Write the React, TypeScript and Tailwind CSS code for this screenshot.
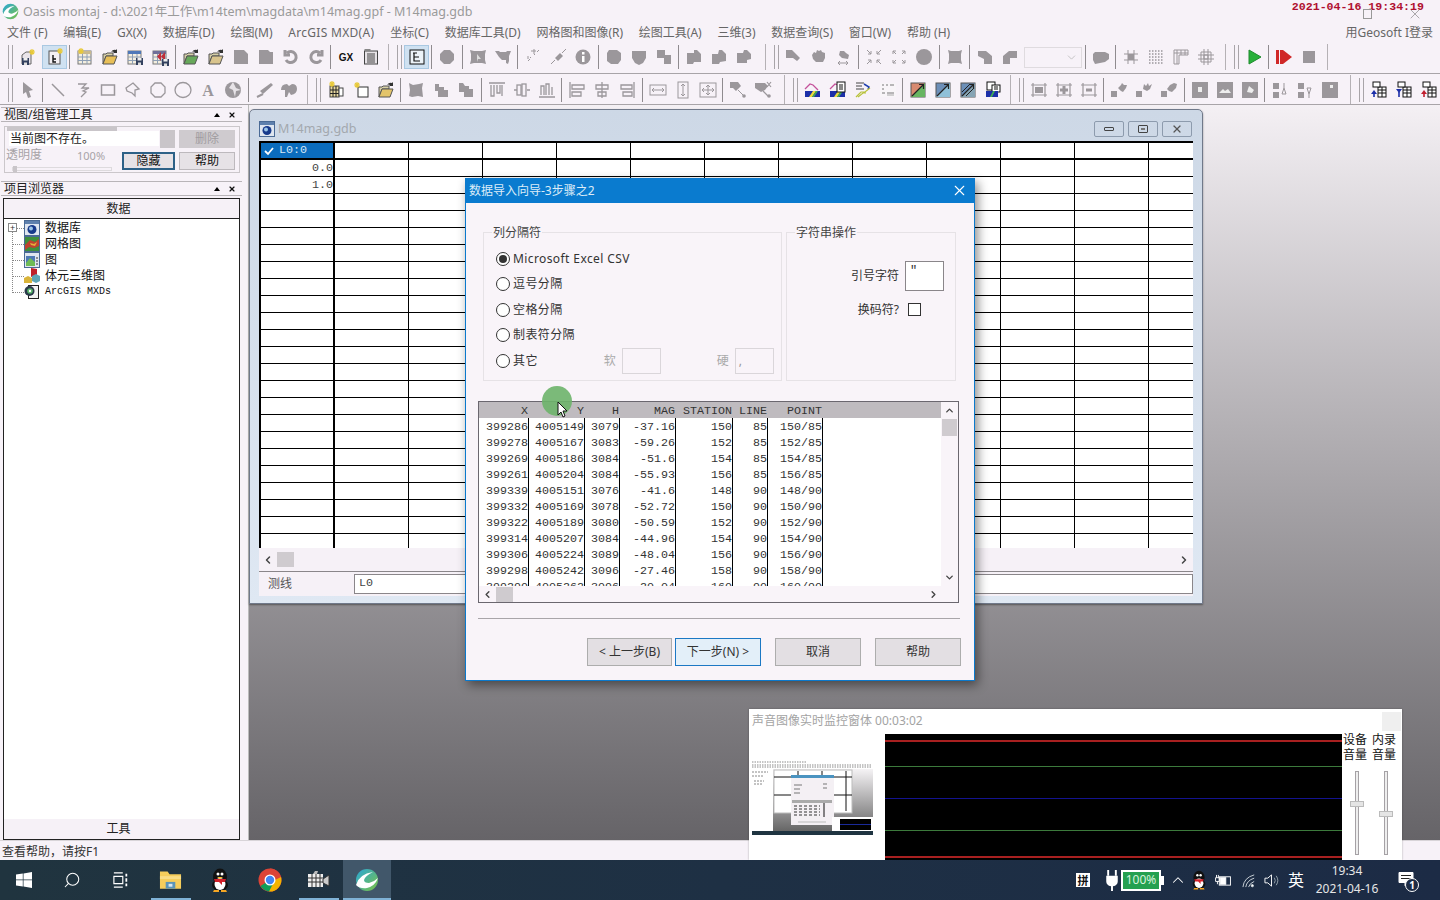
import type { ReactNode } from "react";
import { ChevronDown, ChevronLeft, ChevronRight, ChevronUp, Search, X } from "lucide-react";

const SANS = "font-['Noto_Sans','Noto_Sans_CJK_SC',sans-serif]";
const MONO = "font-['Liberation_Mono','Noto_Sans_CJK_SC',monospace]";
const G = "#9b979b";

// 菜单
const menus = ["文件 (F)", "编辑(E)", "GX(X)", "数据库(D)", "绘图(M)", "ArcGIS MXD(A)", "坐标(C)", "数据库工具(D)", "网格图和图像(R)", "绘图工具(A)", "三维(3)", "数据查询(S)", "窗口(W)", "帮助 (H)"];

const Star = ({ x = 13, y = 3 }: { x?: number; y?: number }) => (
  <path d={`M${x} ${y - 3}v6M${x - 3} ${y}h6M${x - 2} ${y - 2}l4 4M${x + 2} ${y - 2}l-4 4`} stroke="#e8c93a" strokeWidth="1.200" />
);
const Disk = ({ x = 9, y = 10 }: { x?: number; y?: number }) => (
  <g>
    <rect x={x} y={y} width="7" height="7" fill="#33405e" />
    <rect x={x + 1.5} y={y} width="4" height="2.5" fill="#eee" />
    <rect x={x + 2} y={y + 4.5} width="3" height="2.5" fill="#ddd" />
  </g>
);
const Folder = ({ fill = "#e8bf58" }: { fill?: string }) => (
  <g>
    <path d="M2 6h3l1-1h6v3H5L2 16z" fill="#d6cfa8" stroke="#555" />
    <path d="M2 16l3-8h11l-3 8z" fill={fill} stroke="#555" />
    <path d="M10 4q2-3 5-2l1-1v4h-4l1-1q-2-1-3 0z" fill="#333" />
  </g>
);
const Table = ({ head = "#c9b98e" }: { head?: string }) => (
  <g>
    <rect x="2" y="3" width="13" height="13" fill="#f3eee0" stroke="#777" />
    <rect x="2" y="3" width="13" height="3" fill={head} />
    <path d="M2 9h13M2 12.500h13M6.500 6v10M11 6v10" stroke="#8e9fb5" />
  </g>
);
const blob = (d: string) => <path d={d} fill={G} />;
const line = (d: string, w = 1) => <path d={d} fill="none" stroke={G} strokeWidth={w} />;
const Curve = ({ children }: { children?: ReactNode }) => (
  <g>
    <path d="M1 8l5-5 3 1 5 5" fill="none" stroke="#c4509a" strokeWidth="1.300" />
    <rect x="1" y="10" width="15" height="6" fill="#1c2fa8" />
    <path d="M5 16l4-6h3l-4 6z" fill="#ecdc3a" />
    <path d="M8 16l4-6h2l-4 6z" fill="#3faa55" />
    {children}
  </g>
);
const Arrowed = ({ a, b }: { a: string; b: string }) => (
  <g>
    <rect x="2" y="2" width="14" height="14" fill={a} stroke="#555" />
    <path d="M2 16L16 2v14z" fill={b} />
    <path d="M3 15L14 4M10 3.500h4.500V8" fill="none" stroke="#222" strokeWidth="1.200" />
  </g>
);
const PairTable = ({ arrow, dir }: { arrow: string; dir: "down" | "up" }) => (
  <g>
    <rect x="8" y="6" width="8" height="10" fill="#fff" stroke="#111" />
    <path d="M8 9h8M8 12h8M12 6v10" stroke="#111" />
    <rect x="3" y="1" width="7" height="5" fill="#fff" stroke="#111" />
    <path d={dir === "up" ? "M4 13l-3 0 3-4 3 4z" : "M4 12l3-4H1z"} fill={arrow} />
    <rect x="3.200" y="11" width="1.600" height="5" fill={arrow} />
  </g>
);

const icons: Record<string, ReactNode> = {
  newProj: (<><path d="M3 7l4-3h5v12H3z" fill="#e9e4e9" stroke="#666" /><Disk x={3} y={10} /><Star x={13} y={4} /></>),
  newDb: (<><rect x="3" y="3" width="11" height="13" fill="#f4f0f4" stroke="#555" /><path d="M7 7v7h3M7 11h3" stroke="#111" strokeWidth="1.400" fill="none" /><Star x={14} y={3} /></>),
  newTable: (<><Table /><Star x={5} y={3} /></>),
  open: <Folder />,
  tableSave: (<><Table head="#4f78b8" /><Disk x={10} y={10} /></>),
  rewind: (<><Table head="#6f6f98" /><path d="M10 4v9l-4-4.500zM14 4v9l-4-4.500z" fill="#c0303a" /><Disk x={11} y={11} /></>),
  openMap: (<><Folder fill="#67a85a" /></>),
  openDoc: <Folder fill="#d9c48d" />,
  docA: blob("M2 2h10l4 4v10H2z"),
  docB: blob("M2 2h9l2 2h3v12H2z"),
  undo: line("M5 5a5.500 5.500 0 1 1-1 7M3 2v5h5", 3),
  redo: line("M13 5a5.500 5.500 0 1 0 1 7M15 2v5h-5", 3),
  gx: <text x="9" y="13" textAnchor="middle" fontSize="10" fontWeight="700" fontFamily="Liberation Sans" fill="#111">GX</text>,
  notes: (<><rect x="2.500" y="3" width="13" height="13" fill="#e6e2e6" stroke="#444" /><rect x="2.500" y="1" width="6" height="2" fill="#888" /><path d="M5 6h8M5 8h8M5 10h8M5 12h8M5 14h8" stroke="#444" /></>),
  tree: (<><rect x="2" y="2" width="14" height="14" fill="#edf3f8" stroke="#111" /><path d="M5 5h4M6 5v8h6M6 9h5" stroke="#111" fill="none" strokeWidth="1.200" /></>),
  hexBlob: blob("M6 2h6l4 4v6l-4 4H6l-4-4V6z"),
  roughArrow: (<>{blob("M1 2l4 1h8l4-1-1 4v6l1 4-4-1H5l-4 1 1-4V6z")}<path d="M8 6l4 5H9l-1 3z" fill="#ddd" /></>),
  bat: blob("M1 3h4l1 1h6l1-1h4l-2 5v5l-1 3-2-1v-3H8L5 9 3 6z"),
  spark: line("M4 13l2-2M7 9l-1 1M10 7l1-1M13 4l2-2M4 8v3M10 1v5M7 3h5", 1),
  diag: (<>{blob("M6 10l5-5 3 3-5 5z")}{line("M2 16l4-4M13 5l4-4", 1)}</>),
  info: (<><circle cx="9" cy="9" r="7.500" fill={G} /><rect x="8" y="8" width="2.500" height="6" fill="#fff" /><rect x="8" y="4" width="2.500" height="2.500" fill="#fff" /></>),
  lump: blob("M4 2h8l4 3v7l-3 4H6l-4-3V5z"),
  shield: blob("M2 3h14v7l-3 5-4 2-4-2-3-5z"),
  stair: blob("M2 2h8v5h6v9H9v-6H2z"),
  pent: blob("M2 5h7V2h3l4 4v8h-7l-1 2H2z"),
  pentB: blob("M2 6h6l1-4h3l4 4v7l-6 1-1 2H2z"),
  pentC: blob("M2 5h6l1-3h3l4 4v5l-4 1v3H2z"),
  corner: blob("M1 2h6l8 8-3 3-4-3H1z"),
  hand: blob("M2 7l2-3 2 1 1-3 2 1 2-1 1 2 3 1v5l-2 4H6L3 11z"),
  handArrow: (<>{blob("M5 3h4l2 2 3 2-1 4-6-1-3-3z")}{line("M3 15h10M3 15l2-2M3 15l2 2M13 15l-2-2M13 15l-2 2")}</>),
  inward: line("M2 2l4 4M6 3v3H3M16 2l-4 4M12 3v3h3M2 16l4-4M6 15v-3H3M16 16l-4-4M12 15v-3h3"),
  outward: line("M6 6L3 3M3 6V3h3M12 6l3-3M12 3h3v3M6 12l-3 3M3 12v3h3M12 12l3 3M12 15h3v-3"),
  dot: <circle cx="9" cy="9" r="8" fill={G} />,
  squareBlob: blob("M2 2l3 1h8l3-1-1 4v6l1 4-3-1H5l-3 1 1-4V6z"),
  stepA: blob("M2 3h8l6 5v8H8v-5L2 8z"),
  stepB: blob("M2 16V8l6-5h8v7H9v6z"),
  cloud: blob("M3 4h10l4 2v5l-4 3-10 2-2-4V6z"),
  gridA: (<>{line("M2 6h14M2 12h14M6 2v14M12 2v14")}<rect x="6" y="6" width="6" height="6" fill={G} /></>),
  gridDots: <path d="M2 3h14M2 6h14M2 9h14M2 12h14M2 15h14" fill="none" stroke={G} strokeWidth="1.500" strokeDasharray="1.500 1.500" />,
  gridL: line("M2 2h14v5H7v9H2zM2 5h14M5 2v14M9 2v5M13 2v5"),
  gridC: line("M4 4h10v10H4zM1 7h16M1 11h16M7 1v16M11 1v16M7 7h4v4H7z"),
  play: <path d="M4 2l12 7-12 7z" fill="#28b03a" stroke="#1f8c2e" />,
  redPlay: (<><rect x="1" y="2" width="3" height="14" fill="#d02828" /><rect x="5" y="2" width="3" height="14" fill="#d02828" /><path d="M8 2l9 7-9 7z" fill="#d02828" /></>),
  stop: <rect x="3" y="3" width="12" height="12" fill="#9b979b" />,
  pointer: blob("M4 1l10 8-4 1 2 6-3 1-2-6-3 2z"),
  lineT: line("M3 3l12 12", 1.500),
  poly: line("M4 3h8l-4 4h7l-6 3 3 1-5 5", 1.300),
  rect: <rect x="2.500" y="4" width="13" height="10" fill="none" stroke={G} strokeWidth="1.500" />,
  arrowPoly: line("M9 2l6 6-4 1v6l-3-3-5-2-1-3z", 1.300),
  octa: line("M6 2h6l4 4v6l-4 4H6l-4-4V6z", 1.300),
  ellipse: <ellipse cx="9" cy="9" rx="8" ry="7.500" fill="none" stroke={G} strokeWidth="1.300" />,
  letterA: <text x="9" y="15" textAnchor="middle" fontSize="16" fontWeight="700" fontFamily="Liberation Serif" fill={G}>A</text>,
  globe: (<><circle cx="9" cy="9" r="8" fill={G} /><path d="M9 1l3 6 5 2-5 1-1 6-2-7-4-2z" fill="#e7e3e7" /></>),
  brush: (<>{blob("M16 2l2 2-10 9-3-3z")}{line("M2 16l6-3", 2)}</>),
  leaf: blob("M1 9q0-6 6-6l2 2 3-2q5 0 5 5t-6 6l-2-3-2 5H5V9z"),
  newGrid: (<><rect x="3" y="5" width="9" height="11" fill="#e8d9a0" stroke="#444" /><path d="M6 5v11M9 5v11M3 9h9M3 12.500h9" stroke="#222" /><rect x="12" y="7" width="4" height="8" fill="#fff" stroke="#444" /><Star x={5} y={3} /></>),
  newFrame: (<><rect x="6" y="6" width="10" height="10" fill="#fff" stroke="#333" /><Star x={5} y={4} /></>),
  openB: <Folder fill="#e3c46a" />,
  roughB: blob("M2 2l4 2 6-1 4-1-1 5 1 9-5-1-6 1-3-1 1-6z"),
  stepC: blob("M3 3h4v3h5v3h4v7H6v-6H3z"),
  stepD: blob("M2 2h4l2 3h4v3h4v8H7v-5H2z"),
  alignTop: (<>{line("M1 2h16M3 4v11h3V4M9 4v8h3V4M14 4v11", 1.300)}</>),
  alignMid: (<>{line("M1 9h3M14 9h3", 1.300)}<rect x="4" y="4" width="4" height="10" fill="none" stroke={G} strokeWidth="1.300" /><rect x="9" y="3" width="4" height="12" fill="none" stroke={G} strokeWidth="1.300" /></>),
  alignBot: (<>{line("M1 16h16M3 14V5h3v9M8 14V3h3v11M14 14V6", 1.300)}</>),
  alignL: (<>{line("M2 1v16M4 4h12v4H4zM4 11h9v4H4z", 1.300)}</>),
  alignC: (<>{line("M9 1v16M3 4h12v4H3zM5 11h8v4H5z", 1.300)}</>),
  alignR: (<>{line("M16 1v16M3 4h11v4H3zM5 11h9v4H5z", 1.300)}</>),
  sizeH: (<><rect x="1" y="4" width="16" height="10" fill="none" stroke={G} /><path d="M3 9h12M3 9l2-2M3 9l2 2M15 9l-2-2M15 9l-2 2" stroke={G} fill="none" /></>),
  sizeV: (<><rect x="4" y="1" width="10" height="16" fill="none" stroke={G} /><path d="M9 3v12M9 3l-2 2M9 3l2 2M9 15l-2-2M9 15l2-2" stroke={G} fill="none" /></>),
  sizeB: (<><rect x="1" y="2" width="16" height="14" fill="none" stroke={G} /><path d="M3 9h12M9 4v10M3 9l2-2M3 9l2 2M15 9l-2-2M15 9l-2 2M9 4L7 6M9 4l2 2M9 14l-2-2M9 14l2-2" stroke={G} fill="none" /></>),
  node: (<>{blob("M1 1h8l3 4-3 3-2 2-3-3H1z")}{line("M9 9l5 5", 1)}<circle cx="15" cy="15" r="1.800" fill={G} /></>),
  nodeX: (<>{blob("M1 2h10l3 3-3 4-4 2-6-4z")}{line("M13 1l4 5M17 1l-4 5M9 10l5 5", 1.200)}<circle cx="15" cy="15" r="1.800" fill={G} /></>),
  curveA: <Curve />,
  curveB: (<Curve><rect x="8" y="1" width="8" height="10" fill="#fff" stroke="#111" /><path d="M10 4h4M10 6h4M10 8h4" stroke="#111" /></Curve>),
  transfer: (<><path d="M2 2h8M2 5h6M2 8h8" stroke="#444" /><path d="M10 3l5 3-1 2" fill="none" stroke="#1f3fb0" strokeWidth="1.500" /><path d="M2 16l5-5h4l5-4M4 16l5-4h3" fill="none" stroke="#b8c23a" strokeWidth="1.200" /></>),
  legend: (<><rect x="1" y="2" width="16" height="14" fill="#f8f5f8" /><path d="M3 4h2M7 4h2M11 4h4M3 8h2M3 12h3M8 12h7" stroke="#777" /><path d="M8 14h7" stroke="#aaa" /></>),
  arrowA: <Arrowed a="#d88a70" b="#67b561" />,
  arrowB: <Arrowed a="#6c8fb8" b="#8fc0d8" />,
  arrowC: (<><Arrowed a="#6c8fb8" b="#86a4b4" /><path d="M3 11l8-8M7 15l8-8" stroke="#222" /></>),
  docsPair: (<><rect x="3" y="1" width="8" height="8" fill="#fff" stroke="#111" /><rect x="8" y="4" width="8" height="7" fill="#fff" stroke="#111" /><path d="M10 6h4M10 8h4" stroke="#111" /><rect x="2" y="10" width="12" height="6" fill="#1c2fa8" /><path d="M6 16l3-6h2l-3 6z" fill="#3faa55" /></>),
  frameX: (<>{line("M3 2v14M15 2v14M1 4h16M1 14h16", 1.200)}<rect x="5" y="6" width="8" height="6" fill={G} /></>),
  framePlus: (<>{line("M3 2v14M15 2v14M1 4h16M1 14h16", 1.200)}{line("M9 5v8M5 9h8", 3)}</>),
  frameMinus: (<>{line("M3 2v14M15 2v14M1 4h16M1 14h16", 1.200)}{line("M6 9h6", 3)}</>),
  stackA: blob("M1 10h6v6H1zM8 7l3-3 1-2 2 2 3 0-1 3-3 4-2-1z"),
  stackB: blob("M1 10h6v6H1zM8 8l1-5 2 2 2-3 1 3 3-2-2 5-3 2-2-1z"),
  stackC: blob("M1 10h6v6H1zM7 8l3-4 4-2 3 1-1 4-4 4-3-1z"),
  boxNotch: (<>{blob("M1 1h16v16H1z")}<rect x="7" y="6" width="4" height="5" fill="#eee" /></>),
  boxWave: (<>{blob("M1 1h16v16H1z")}<path d="M3 12l4-4 2 2 3-2 3 4z" fill="#eee" /></>),
  boxBite: (<>{blob("M1 1h16v16H1z")}<path d="M8 5l5 4-2 3-5-1z" fill="#eee" /></>),
  upDown: (<>{blob("M2 2h6v6H2zM2 11h6v6H2z")}{line("M13 7l2 6h-4zM13 2v5", 1)}</>),
  downUp: (<>{blob("M2 2h6v6H2zM2 11h6v6H2z")}{line("M13 13l2-6h-4zM13 13v4", 1)}</>),
  boxSm: (<>{blob("M1 1h16v16H1z")}<rect x="9" y="4" width="3" height="3" fill="#eee" /></>),
  tA: <PairTable arrow="#1c2fa8" dir="up" />,
  tB: <PairTable arrow="#1c2fa8" dir="down" />,
  tC: <PairTable arrow="#c02030" dir="up" />,
};

function Cell({ name }: { name: string }) {
  const active = name === "newDb" || name === "tree";
  return (
    <div className={`flex h-[24px] w-[25px] shrink-0 items-center justify-center ${active ? "border border-[#a9c8e2] bg-[#cfe1f1]" : ""}`}>
      <svg viewBox="0 0 18 18" className="h-[18px] w-[18px]">
        {icons[name]}
      </svg>
    </div>
  );
}

function Grip() {
  return <div className="mr-[2px] h-[24px] w-[5px] shrink-0 border-x border-[#a8a4a8]" />;
}

// バンド: | = 区切り  . = 2px
function Band({ items, className }: { items: string[]; className: string }) {
  return (
    <div className={`flex shrink-0 items-center border-r border-[#b5b1b5] pl-[8px] ${className}`}>
      <Grip />
      {items.map((it, i) =>
        it === "|" ? (
          <div key={i} className="mx-[2.250px] h-[24px] w-px shrink-0 bg-[#8f8b8f]" />
        ) : it === "." ? (
          <div key={i} className="w-[2px] shrink-0" />
        ) : it === "combo" ? (
          <div key={i} className="mx-[1px] flex h-[21px] w-[58px] shrink-0 items-center justify-end border border-[#dfdbdf] pr-[3px]">
            <ChevronDown size={13} strokeWidth={1.2} color="#aaa" />
          </div>
        ) : (
          <Cell key={i} name={it} />
        ),
      )}
    </div>
  );
}

function ToolBars() {
  return (
    <div className="flex flex-col">
      <div className="flex h-[30px] border-b border-[#a8a4a8] pb-[3px]">
        <Band className="w-[389px]" items={["newProj", ".", "newDb", "|", "newTable", "open", "tableSave", "rewind", "|", "openMap", "openDoc", "docA", "docB", "undo", "redo", "|", "gx", "notes"]} />
        <Band className="w-[377px]" items={["tree", "|", "hexBlob", "|", "roughArrow", "bat", "|", "spark", "diag", "info", "|", "lump", "shield", "stair", "|", "pent", "pentB", "pentC"]} />
        <Band className="w-[460px]" items={["corner", "hand", "handArrow", "|", "inward", "outward", "dot", "|", "squareBlob", "|", "stepA", "stepB", "combo", "|", "cloud", "|", "gridA", "gridDots", "gridL", "gridC"]} />
        <Band className="w-[102px]" items={["play", "|", "redPlay", "stop"]} />
      </div>
      <div className="flex h-[31px] border-b border-[#a8a4a8] pt-[1px]">
        <Band className="w-[308px]" items={["pointer", "|", "lineT", "poly", "rect", "arrowPoly", "octa", "ellipse", "letterA", "globe", "|", "brush", "leaf"]} />
        <Band className="w-[477px]" items={["newGrid", "newFrame", "openB", "|", "roughB", "stepC", "stepD", "|", "alignTop", "alignMid", "alignBot", "|", "alignL", "alignC", "alignR", "|", "sizeH", "sizeV", "sizeB", "|", "node", "nodeX"]} />
        <Band className="w-[226px]" items={["curveA", "curveB", "transfer", "legend", "|", "arrowA", "arrowB", "arrowC", "docsPair"]} />
        <Band className="w-[340px]" items={["frameX", "framePlus", "frameMinus", "|", "stackA", "stackB", "stackC", "|", "boxNotch", "boxWave", "boxBite", "|", "upDown", "downUp", "boxSm"]} />
        <div className="flex items-center pl-[8px]">
          <Grip />
          <Cell name="tA" />
          <Cell name="tB" />
          <Cell name="tC" />
        </div>
      </div>
    </div>
  );
}

function PanelHead({ title }: { title: string }) {
  return (
    <div className="flex h-[15px] items-center justify-between border-y border-[#b8b4b8] px-[3px] pr-[6px] text-[12px] leading-none text-[#222]">
      <span>{title}</span>
      <span className="flex items-center gap-[8px]">
        <span className="h-0 w-0 border-x-[3px] border-b-[4px] border-x-transparent border-b-black" />
        <X size={8} strokeWidth={3.5} color="#111" />
      </span>
    </div>
  );
}

const TreeIcon = ({ kind }: { kind: string }) => (
  <svg viewBox="0 0 16 16" className="h-[16px] w-[16px] shrink-0">
    {kind === "db" && (<><rect x="0.500" y="0.500" width="15" height="15" fill="#dfe6f0" stroke="#4a6a95" /><rect x="1" y="1" width="14" height="3" fill="#5e80ad" /><circle cx="8" cy="9.500" r="4.500" fill="#173a8c" /><circle cx="7" cy="8.500" r="2" fill="#9cc6e8" /></>)}
    {kind === "grid" && (<><rect x="0.500" y="0.500" width="15" height="15" fill="#3f8f3c" stroke="#4a6a95" /><path d="M1 9l5-5 5 2 4-3v7l-5 2-5-1-4 3z" fill="#c0412f" /><path d="M6 7l4 1 3-2-2 4-4-1z" fill="#e1b13a" /></>)}
    {kind === "map" && (<><rect x="0.500" y="0.500" width="15" height="15" fill="#dfe6f0" stroke="#4a6a95" /><rect x="2" y="4" width="9" height="10" fill="#4f79b5" /><path d="M2 11l4-5 5 4v4H2z" fill="#6fbc55" /><path d="M13 5v9" stroke="#333" strokeDasharray="2 1" /></>)}
    {kind === "vox" && (<><path d="M7 0l6 1v6l-6 2z" fill="#c02028" /><path d="M0 10l4-2 4 2v5H0z" fill="#d9b43a" /><path d="M8 8l4-2 4 2v5l-4 2-4-2z" fill="#5da5b5" /></>)}
    {kind === "mxd" && (<><rect x="4.500" y="1.500" width="10" height="13" fill="#f2f2f2" stroke="#222" /><circle cx="5.500" cy="7" r="5" fill="#2a3a4a" /><circle cx="6" cy="7" r="2.800" fill="#59b56b" /><circle cx="6" cy="7" r="1.200" fill="#fff" /></>)}
  </svg>
);

const treeRows = [
  { kind: "db", label: "数据库" },
  { kind: "grid", label: "网格图" },
  { kind: "map", label: "图" },
  { kind: "vox", label: "体元三维图" },
];

function LeftPanel() {
  return (
    <aside className="flex h-full w-[248px] shrink-0 flex-col pt-[2px] pl-[1px]">
      <div className="w-[241px]">
        <PanelHead title="视图/组管理工具" />
      </div>
      <div className="relative mt-[4px] ml-[3px] h-[47px] w-[236px] border border-[#cbc7cb] text-[12px] leading-none">
        <div className="ml-[2px] h-[4px] w-[110px] bg-[#c9c5c9]" />
        <div className="flex">
          <div className="ml-[4px] flex h-[15px] w-[150px] items-center bg-white px-[1px] text-[#222]">当前图不存在。</div>
        </div>
        <div className="mt-[3px] flex items-center pl-[1px] text-[#a7a3a7]">
          <span>透明度</span>
          <span className="ml-[35px] text-[11px]">100%</span>
        </div>
        <div className="absolute bottom-[1px] left-[7px] h-[4px] w-[100px] border border-[#dddadd]">
          <div className="-mt-[2px] h-[6px] w-[4px] bg-[#c9c5c9]" />
        </div>
        <div className="absolute top-[3px] left-[117px] grid grid-cols-[53px_56px] gap-x-[4px] gap-y-[4px]">
          <div className="ml-[38px] h-[18px] w-[15px] bg-[#c9c5c9]" />
          <div className="flex h-[18px] items-center justify-center bg-[#cfcbcf] text-[#a09ca0]">删除</div>
          <div className="flex h-[18px] items-center justify-center border-2 border-[#2d6187] bg-[#e6e2e6] text-[#111]">隐藏</div>
          <div className="flex h-[18px] items-center justify-center border border-[#bdb9bd] bg-[#e6e2e6] text-[#111]">帮助</div>
        </div>
      </div>
      <div className="mt-[8px] w-[241px]">
        <PanelHead title="项目浏览器" />
      </div>
      <div className="mt-[2px] ml-[2px] flex h-[642px] w-[237px] flex-col border-x border-b border-[#222] bg-white">
        <div className="flex h-[21px] shrink-0 items-center justify-center border-y border-[#222] bg-[#f6f1f7] pr-[6px] text-[12px] text-[#222]">数据</div>
        <div className="relative pt-[1px] pl-[8px] text-[12px] leading-none text-[#111]">
          <div className="absolute top-[8px] left-[8px] h-[64px] border-l border-dotted border-[#888]" />
          {treeRows.map((r) => (
            <div key={r.label} className="flex h-[16px] items-center">
              <div className="w-[12px] border-t border-dotted border-[#888]" />
              <TreeIcon kind={r.kind} />
              <span className="ml-[5px]">{r.label}</span>
            </div>
          ))}
          <div className="flex h-[16px] items-center">
            <div className="w-[12px] border-t border-dotted border-[#888]" />
            <TreeIcon kind="mxd" />
            <span className={`ml-[5px] text-[10px] ${MONO}`}>ArcGIS MXDs</span>
          </div>
          <div className="absolute top-[4px] left-[4px] flex h-[9px] w-[9px] items-center justify-center border border-[#888] bg-white text-[9px] leading-none text-[#333]">+</div>
        </div>
        <div className="mt-auto flex h-[20px] items-center justify-center bg-[#f6f1f7] pr-[6px] text-[12px] text-[#222]">工具</div>
      </div>
    </aside>
  );
}

function MdiGrid() {
  const cols = Array.from({ length: 13 });
  const rows = Array.from({ length: 24 });
  return (
    <div className={`grid h-[407px] grid-cols-[74px_repeat(11,74px)_46px] grid-rows-[repeat(24,17px)] overflow-hidden border-t-2 border-l-2 border-black bg-white text-[11.700px] ${MONO}`}>
      {rows.map((_, r) =>
        cols.map((_, c) => {
          const head = r === 0 && c === 0;
          return (
            <div
              key={`${r}-${c}`}
              className={`flex items-center justify-end border-black ${c === 0 ? "border-r-2" : "border-r"} ${r === 0 ? "border-b-2" : "border-b"} ${head ? "justify-start! bg-[#0b6cbd] pl-[3px] text-[#d8e8f5]" : "pt-[2px] text-[#444]"}`}
            >
              {head && (
                <span className="flex items-center gap-[5px]">
                  <svg viewBox="0 0 10 10" className="h-[10px] w-[10px]"><path d="M1 5l3 3 5-6" fill="none" stroke="#fff" strokeWidth="1.800" /></svg>
                  L0:0
                </span>
              )}
              {c === 0 && r === 1 && "0.0"}
              {c === 0 && r === 2 && "1.0"}
            </div>
          );
        }),
      )}
    </div>
  );
}

function MdiWindow() {
  return (
    <div className="absolute top-[4px] left-0 flex h-[495px] w-[954px] flex-col rounded-t-[5px] border border-[#70798a] bg-gradient-to-b from-[#cdd8e6] to-[#dfe8f3] px-[9px] shadow-[0_1px_2px_rgba(0,0,0,0.4)]">
      <div className="flex h-[31px] shrink-0 items-center pt-[7px]">
        <svg viewBox="0 0 16 16" className="h-[16px] w-[16px]">
          <rect x="0.500" y="0.500" width="15" height="15" fill="#dfe6f0" stroke="#4a6a95" />
          <rect x="1" y="1" width="14" height="3" fill="#5e80ad" />
          <circle cx="8" cy="9.500" r="4.500" fill="#173a8c" />
          <circle cx="7" cy="8.500" r="2" fill="#9cc6e8" />
        </svg>
        <span className={`ml-[3px] text-[12.500px] text-[#a3a8ae] ${SANS}`}>M14mag.gdb</span>
        <div className="ml-auto flex gap-[4px] pr-[1px]">
          <div className="flex h-[16px] w-[30px] items-center justify-center rounded-[2px] border border-[#8d9bad]">
            <div className="h-[4px] w-[10px] rounded-[1px] border border-[#444]" />
          </div>
          <div className="flex h-[16px] w-[30px] items-center justify-center rounded-[2px] border border-[#8d9bad]">
            <div className="flex h-[8px] w-[10px] items-center justify-center rounded-[1px] border border-[#444]">
              <div className="h-[2px] w-[4px] bg-[#777]" />
            </div>
          </div>
          <div className="flex h-[16px] w-[30px] items-center justify-center rounded-[2px] border border-[#8d9bad]">
            <X size={12} strokeWidth={2.4} color="#555" />
          </div>
        </div>
      </div>
      <MdiGrid />
      <div className="flex h-[23px] shrink-0 items-center bg-[#f6f1f7] px-[3px]">
        <ChevronLeft size={12} strokeWidth={3} color="#444" />
        <div className="ml-[3px] h-[15px] w-[17px] bg-[#cfcbcf]" />
        <div className="ml-auto"><ChevronRight size={12} strokeWidth={3} color="#444" /></div>
      </div>
      <div className="flex h-[25px] shrink-0 items-center border-t border-[#8a868a] bg-[#f6f1f7] pl-[9px] text-[12px] text-[#555]">
        <span className="w-[86px]">测线</span>
        <div className={`flex h-[20px] flex-1 items-center border border-[#8a868a] bg-white pl-[4px] text-[11.700px] text-[#444] ${MONO}`}>L0</div>
      </div>
      <div className="h-[7px] shrink-0" />
    </div>
  );
}

const dataRows = [
  ["399286", "4005149", "3079", "-37.16", "150", "85", "150/85"],
  ["399278", "4005167", "3083", "-59.26", "152", "85", "152/85"],
  ["399269", "4005186", "3084", "-51.6", "154", "85", "154/85"],
  ["399261", "4005204", "3084", "-55.93", "156", "85", "156/85"],
  ["399339", "4005151", "3076", "-41.6", "148", "90", "148/90"],
  ["399332", "4005169", "3078", "-52.72", "150", "90", "150/90"],
  ["399322", "4005189", "3080", "-50.59", "152", "90", "152/90"],
  ["399314", "4005207", "3084", "-44.96", "154", "90", "154/90"],
  ["399306", "4005224", "3089", "-48.04", "156", "90", "156/90"],
  ["399298", "4005242", "3096", "-27.46", "158", "90", "158/90"],
  ["399290", "4005262", "3096", "-20.04", "160", "90", "160/90"],
];
const heads = ["X", "Y", "H", "MAG", "STATION", "LINE", "POINT"];
const COLS = "grid-cols-[50px_56px_35px_56px_57px_35px_55px]";

function Preview() {
  return (
    <div className={`flex h-[202px] w-[481px] flex-col border border-[#6b676f] bg-white text-[11.670px] leading-none text-[#333] ${MONO}`}>
      <div className="flex h-[184px]">
        <div className="flex-1 overflow-hidden">
          <div className="h-[16px] bg-[#bfbbbf]">
            <div className={`grid h-[16px] ${COLS} items-center pt-[4px]`}>
              {heads.map((h) => (
                <div key={h} className="pr-[1px] text-right">{h}</div>
              ))}
            </div>
          </div>
          {dataRows.map((row) => (
            <div key={row[0]} className={`grid h-[16px] ${COLS}`}>
              {row.map((v, i) => (
                <div key={i} className="flex items-center justify-end border-r border-black pt-[4px]">{v}</div>
              ))}
            </div>
          ))}
        </div>
        <div className="flex w-[17px] flex-col items-center bg-[#f9f4f9] pt-[3px] pb-[3px]">
          <ChevronUp size={11} strokeWidth={3} color="#444" />
          <div className="mt-[3px] h-[17px] w-[15px] bg-[#cfcbcf]" />
          <div className="mt-auto"><ChevronDown size={11} strokeWidth={3} color="#444" /></div>
        </div>
      </div>
      <div className="flex h-[16px] items-center bg-[#f9f4f9] pl-[3px]">
        <ChevronLeft size={11} strokeWidth={3} color="#444" />
        <div className="ml-[3px] h-[15px] w-[17px] bg-[#cfcbcf]" />
        <div className="ml-[415px]"><ChevronRight size={11} strokeWidth={3} color="#444" /></div>
      </div>
    </div>
  );
}

function Radio({ label, on }: { label: string; on?: boolean }) {
  return (
    <div className="flex items-center gap-[3px]">
      <span className="flex h-[14px] w-[14px] items-center justify-center rounded-full border border-[#333] bg-white">
        {on && <span className="h-[8px] w-[8px] rounded-full bg-[#333]" />}
      </span>
      <span className="tracking-[0.4px]">{label}</span>
    </div>
  );
}

function Btn({ label, primary, className }: { label: string; primary?: boolean; className: string }) {
  return (
    <div className={`flex h-[28px] items-center justify-center border text-[12px] ${className} ${primary ? "border-[#1c78c4] bg-[#e3eff9]" : "border-[#adadad] bg-[#e3dfe3]"}`}>
      {label}
    </div>
  );
}

function Dialog() {
  return (
    <div className={`absolute top-[178px] left-[465px] z-10 flex h-[503px] w-[510px] flex-col border border-[#0b79cc] bg-[#f9f4f9] text-[12px] leading-none text-[#333] shadow-[3px_4px_10px_rgba(0,0,0,0.45)] ${SANS}`}>
      <div className="flex h-[24px] shrink-0 items-center justify-between bg-[#0a7bcf] pr-[6px] pb-[1px] pl-[3px] text-[#dcecf8]">
        <span>数据导入向导-3步骤之2</span>
        <X size={17} strokeWidth={1.5} color="#fff" />
      </div>
      <div className="mt-[21px] ml-[17px] flex gap-[4px]">
        <fieldset className="h-[157px] w-[299px] border border-[#e6e2e6]">
          <legend className="ml-[8px] h-[16px] px-px leading-[18px] text-[#444]">列分隔符</legend>
          <div className="flex flex-col pt-[6px] pl-[12px]">
            <div className="flex h-[25.500px] items-center"><Radio label="Microsoft Excel CSV" on /></div>
            <div className="flex h-[25.500px] items-center"><Radio label="逗号分隔" /></div>
            <div className="flex h-[25.500px] items-center"><Radio label="空格分隔" /></div>
            <div className="flex h-[25.500px] items-center"><Radio label="制表符分隔" /></div>
            <div className="flex h-[25.500px] items-center">
              <Radio label="其它" />
              <span className="ml-[66px] text-[#aaa]">软</span>
              <div className="ml-[6px] h-[26px] w-[39px] border border-[#dad6da] bg-[#f9f4f9]" />
              <span className="ml-[56px] text-[#aaa]">硬</span>
              <div className="ml-[6px] h-[26px] w-[39px] border border-[#dad6da] bg-[#f9f4f9] pt-[6px] pl-[3px] text-[#999]">,</div>
            </div>
          </div>
        </fieldset>
        <fieldset className="h-[157px] w-[170px] border border-[#e6e2e6]">
          <legend className="ml-[8px] h-[16px] px-px leading-[18px] text-[#444]">字符串操作</legend>
          <div className="flex flex-col pt-[21px]">
            <div className="flex items-center justify-end gap-[6px] pr-[11px]">
              <span>引号字符</span>
              <div className={`h-[30px] w-[39px] border border-[#8a868a] bg-white pt-[3px] pl-[4px] ${MONO}`}>"</div>
            </div>
            <div className="mt-[12px] flex items-center justify-end gap-[9px] pr-[34px]">
              <span>换码符?</span>
              <div className="h-[13px] w-[13px] border border-[#333] bg-white" />
            </div>
          </div>
        </fieldset>
      </div>
      <div className="mt-[20px] ml-[12px]">
        <Preview />
      </div>
      <div className="mt-[15px] ml-[12px] h-px w-[482px] bg-[#a9a5a9]" />
      <div className="mt-[19px] ml-[121px] flex">
        <Btn label="< 上一步(B)" className="w-[85px]" />
        <Btn label="下一步(N) >" primary className="ml-[3px] w-[86px]" />
        <Btn label="取消" className="ml-[14px] w-[86px]" />
        <Btn label="帮助" className="ml-[14px] w-[86px]" />
      </div>
    </div>
  );
}

function CursorHalo() {
  return (
    <div className="absolute top-[386px] left-[542px] z-20 h-[30px] w-[30px]">
      <div className="h-[30px] w-[30px] rounded-full bg-[#6db46a]/90" />
      <svg viewBox="0 0 12 18" className="absolute top-[15px] left-[15px] h-[18px] w-[12px]">
        <path d="M1 1v13l3-3 2 5 2-1-2-5h4z" fill="#fff" stroke="#111" strokeWidth="1" />
      </svg>
    </div>
  );
}

function Thumb() {
  return (
    <svg viewBox="0 0 121 75" className="h-[75px] w-[121px]">
      <rect width="121" height="75" fill="#fff" />
      <path d="M0 2h55M0 5h120M0 7h120" stroke="#8a8a8a" strokeDasharray="1.500 1" strokeWidth="1" />
      <path d="M0 12h16M0 16h12M2 21h10M2 24h8" stroke="#888" strokeDasharray="2 1" />
      <defs>
        <linearGradient id="thumbbg" x1="0" y1="0" x2="0" y2="1">
          <stop offset="0" stopColor="#f5f3f5" />
          <stop offset="1" stopColor="#666" />
        </linearGradient>
      </defs>
      <rect x="21" y="9" width="100" height="62" fill="url(#thumbbg)" />
      <rect x="22" y="10" width="78" height="43" fill="#fff" stroke="#bbb" />
      <path d="M22 17h78M22 35h78M46 11v40M70 11v40M94 11v40" stroke="#111" strokeWidth="1" />
      <rect x="39" y="15" width="43" height="50" fill="#f4f0f4" />
      <rect x="39" y="15" width="43" height="3" fill="#4a93c0" />
      <path d="M42 25h8M42 29h6M42 33h6M71 24h4M71 28h4" stroke="#777" />
      <rect x="40" y="40" width="40" height="3" fill="#aaa" />
      <path d="M42 46h26M42 49h26M42 52h26M42 55h26" stroke="#333" strokeDasharray="3 2" />
      <path d="M72 43v14" stroke="#111" />
      <path d="M46 62h28" stroke="#bbb" />
      <rect x="80" y="57" width="41" height="14" fill="#fff" />
      <rect x="88" y="59" width="31" height="11" fill="#000" />
      <rect x="88" y="64" width="31" height="1" fill="#1a2a9a" />
      <rect x="0" y="71" width="121" height="4" fill="#1f3441" />
    </svg>
  );
}

function VSlider({ thumb }: { thumb: string }) {
  return (
    <div className="relative flex h-[84px] w-[14px] justify-center">
      <div className="h-full w-[4px] border border-[#a5a1a5] bg-[#eee]" />
      <div className={`absolute left-0 h-[6px] w-[14px] border border-[#bbb] bg-[#e5e5e5] ${thumb}`} />
    </div>
  );
}

function Monitor() {
  return (
    <div className={`absolute top-[709px] left-[749px] z-10 flex h-[151px] w-[653px] flex-col bg-white shadow-[0_0_2px_rgba(0,0,0,0.3)] ${SANS}`}>
      <div className="flex h-[25px] shrink-0 items-center justify-between pb-[2px] pl-[3px] text-[12px] text-[#a3a3a3]">
        <span>声音图像实时监控窗体 00:03:02</span>
        <div className="mt-[2px] mr-[1px] h-[19px] w-[19px] bg-[#efefef]" />
      </div>
      <div className="flex flex-1">
        <div className="w-[136px] shrink-0 pt-[26px] pl-[3px]">
          <Thumb />
        </div>
        <div className="relative w-[457px] shrink-0 bg-black">
          <div className="absolute top-[6px] h-[2px] w-full bg-[#a82020]" />
          <div className="absolute top-[32px] h-px w-full bg-[#3c7a3c]" />
          <div className="absolute top-[64px] h-px w-full bg-[#13138f]" />
          <div className="absolute top-[96px] h-px w-full bg-[#3c7a3c]" />
          <div className="absolute top-[122px] h-[2px] w-full bg-[#a82020]" />
        </div>
        <div className="-mt-[2px] flex flex-1 flex-col pl-[1px] text-[12px] leading-[15px] text-[#111]">
          <div className="flex gap-[5px]">
            <span className="w-[24px]">设备音量</span>
            <span className="w-[24px]">内录音量</span>
          </div>
          <div className="mt-[9px] flex gap-[15px] pl-[7px]">
            <VSlider thumb="top-[30px]" />
            <VSlider thumb="top-[40px]" />
          </div>
        </div>
      </div>
    </div>
  );
}

function Taskbar() {
  return (
    <footer className="relative z-20 flex h-[40px] shrink-0 items-center bg-gradient-to-r from-[#20343f] via-[#1e3044] to-[#1c2b45] text-white">
      <div className="flex w-[48px] justify-center">
        <svg viewBox="0 0 16 16" className="h-[16px] w-[16px]"><path d="M0 2.500L6.800 1.500V7.500H0zM7.500 1.400L16 0V7.500H7.500zM0 8.300H6.800V14.500L0 13.500zM7.500 8.300H16V16L7.500 14.600z" fill="#fff" /></svg>
      </div>
      <div className="flex w-[48px] justify-center"><Search size={18} strokeWidth={1.4} className="-scale-x-100" /></div>
      <div className="flex w-[49px] justify-center">
        <svg viewBox="0 0 18 18" className="h-[16px] w-[16px]" fill="none" stroke="#fff" strokeWidth="1.300"><path d="M1 1h10M1 17h10M1 5h10v8H1z" /><path d="M15 2v3M15 7v4M15 13v3" strokeWidth="2" /></svg>
      </div>
      <div className="relative flex h-full w-[50px] items-center justify-center">
        <svg viewBox="0 0 24 20" className="h-[20px] w-[23px]"><path d="M1 1h8l2 3h12v15H1z" fill="#f5cd5b" /><rect x="1" y="6" width="22" height="3" fill="#f9dd86" /><rect x="7" y="12" width="10" height="7" fill="#5a94b8" /><rect x="10" y="14" width="4" height="3" fill="#d9e6ee" /></svg>
        <div className="absolute bottom-0 left-[6px] h-[2px] w-[40px] bg-[#7fb2d6]" />
      </div>
      <div className="flex w-[50px] justify-center">
        <svg viewBox="0 0 20 24" className="h-[24px] w-[20px]"><ellipse cx="10" cy="9" rx="7" ry="8.500" fill="#111" /><ellipse cx="10" cy="17" rx="8" ry="6" fill="#111" /><ellipse cx="10" cy="16" rx="5.500" ry="6" fill="#fff" /><path d="M4 11h12l-1 3-3 0v3l-3-3H5z" fill="#d1202a" /><circle cx="8" cy="6" r="1.500" fill="#fff" /><circle cx="12" cy="6" r="1.500" fill="#fff" /><path d="M7 9h6l-3 2z" fill="#f5c12e" /><path d="M4 22h5v2H3zM11 22h5l1 2h-6z" fill="#f5a623" /></svg>
      </div>
      <div className="flex w-[49px] justify-center">
        <svg viewBox="0 0 24 24" className="h-[24px] w-[24px]"><circle cx="12" cy="12" r="11.500" fill="#db4437" /><path d="M12 12L2.500 18A11.500 11.500 0 0 0 12 23.500L18 12z" fill="#0f9d58" /><path d="M12 .5A11.500 11.500 0 0 1 23 12H12z" fill="#db4437" /><path d="M23 9A11.500 11.500 0 0 1 11 23.500L17 12z" fill="#f4b400" /><circle cx="12" cy="12" r="5.500" fill="#fff" /><circle cx="12" cy="12" r="4.200" fill="#4285f4" /></svg>
      </div>
      <div className="relative flex h-full w-[49px] items-center justify-center">
        <svg viewBox="0 0 24 18" className="h-[18px] w-[24px]"><rect x="1" y="3" width="15" height="13" fill="#eee" /><path d="M1 7h15M1 11h15M5 3v13M9 3v13M13 3v13" stroke="#333" /><path d="M16 8l6-4v11l-6-3z" fill="#ccc" stroke="#333" /><path d="M6 3l2-3h3l-1 3" fill="#bbb" /></svg>
        <div className="absolute bottom-0 left-[5px] h-[2px] w-[40px] bg-[#7fb2d6]" />
      </div>
      <div className="relative flex h-full w-[48px] items-center justify-center bg-[#41576a]">
        <OasisLogo size={24} />
        <div className="absolute bottom-0 left-0 h-[2px] w-full bg-[#7fb2d6]" />
      </div>
      <div className="ml-auto flex h-full items-center">
        <div className="mr-[15px] flex h-[14px] w-[14px] items-center justify-center bg-white text-[11px] font-bold leading-none text-[#111]">拼</div>
        <svg viewBox="0 0 14 24" className="mr-[2px] h-[23px] w-[14px]"><path d="M3 1v6M11 1v6" stroke="#fff" strokeWidth="2" /><path d="M1 7h12v6q0 4-5 5v5H6v-5q-5-1-5-5z" fill="#fff" /></svg>
        <div className="flex h-[21px] w-[40px] items-center justify-center border-2 border-white bg-[#25a050] text-[12px] text-[#d9f3df]">100%</div>
        <div className="h-[9px] w-[3px] bg-white" />
        <ChevronUp size={18} strokeWidth={1.4} className="ml-[5px]" />
        <div className="ml-[1px] w-[22px]">
          <svg viewBox="0 0 20 24" className="mx-auto h-[20px] w-[16px]"><ellipse cx="10" cy="9" rx="7" ry="8.500" fill="#111" /><ellipse cx="10" cy="17" rx="8" ry="6" fill="#111" /><ellipse cx="10" cy="16" rx="5.500" ry="6" fill="#fff" /><path d="M4 11h12l-1 3-3 0v3l-3-3H5z" fill="#d1202a" /><circle cx="8" cy="6" r="1.500" fill="#fff" /><circle cx="12" cy="6" r="1.500" fill="#fff" /><path d="M4 22h5v2H3zM11 22h5l1 2h-6z" fill="#f5a623" /></svg>
        </div>
        <svg viewBox="0 0 18 14" className="ml-[4px] h-[13px] w-[18px]" fill="none" stroke="#fff"><rect x="5" y="3" width="12" height="9" /><rect x="6" y="4" width="6" height="7" fill="#fff" /><path d="M1 4h4v4H1zM2 1v3M4 1v3M3 8v3" /></svg>
        <svg viewBox="0 0 16 16" className="ml-[10px] h-[15px] w-[15px]" fill="none" stroke="#cfd6dc"><path d="M1 15Q2 5 13 2M4 15Q5 8 13 5.500M7 15Q8 11 13 9" /><circle cx="11" cy="13.500" r="1.200" fill="#fff" /></svg>
        <svg viewBox="0 0 16 16" className="ml-[7px] h-[15px] w-[15px]" fill="none" stroke="#fff"><path d="M1 5.500h3L8 2v12l-4-3.500H1z" /><path d="M11 5q2 3 0 6M13 3q3.500 5 0 10" stroke="#98a4ad" /></svg>
        <span className={`ml-[9px] text-[16px] leading-none ${SANS}`}>英</span>
        <div className={`ml-[3px] flex w-[80px] flex-col items-center gap-[2px] text-[12px] leading-[16px] text-[#e6e6e6] ${SANS}`}>
          <span>19:34</span>
          <span>2021-04-16</span>
        </div>
        <div className="relative mr-[26px] ml-[11px] h-[18px] w-[16px]">
          <svg viewBox="0 0 16 16" className="h-[16px] w-[16px]" fill="none" stroke="#fff"><path d="M1 1.500h14v10h-5l-3 3v-3H1z" fill="#fff" /><path d="M3 4.500h10M3 7.500h10" stroke="#222" /></svg>
          <span className="absolute -right-[5px] -bottom-[3px] flex h-[14px] w-[14px] items-center justify-center rounded-full border border-white bg-[#1c2b45] text-[10px] font-bold leading-none">1</span>
        </div>
      </div>
    </footer>
  );
}

function OasisLogo({ size }: { size: number }) {
  return (
    <svg viewBox="0 0 24 24" style={{ width: size, height: size }}>
      <defs>
        <linearGradient id={`oasis${size}`} x1="0" y1="0" x2="1" y2="1">
          <stop offset="0" stopColor="#29a7d8" />
          <stop offset="1" stopColor="#7cc245" />
        </linearGradient>
      </defs>
      <circle cx="12" cy="12" r="11" fill={`url(#oasis${size})`} />
      <path d="M1 17Q4 6 18 4q-8 4-9 8 0 3 5 3 5-1 9-5-3 8-11 10-7 1-11-3z" fill="#fff" />
    </svg>
  );
}

export default function App() {
  return (
    <div className={`relative flex h-[900px] w-[1440px] flex-col overflow-hidden bg-[#f7f2f8] ${SANS}`}>
      {/* タイトル */}
      <header className="relative flex h-[22px] shrink-0 items-center pl-[2px]">
        <OasisLogo size={17} />
        <span className="mt-[2px] ml-[4px] text-[12.500px] text-[#9a9a9a]">Oasis montaj - d:\2021年工作\m14tem\magdata\m14mag.gpf - M14mag.gdb</span>
        <span className={`mt-[-8px] mr-[16px] ml-auto text-[11.600px] font-bold text-[#b01030] ${MONO}`}>2021-04-16 19:34:19</span>
        <div className="absolute top-[9px] left-[1363px] h-[10px] w-[9px] border border-[#999]" />
        <X size={16} strokeWidth={0.8} color="#666" className="absolute top-[6px] left-[1407px]" />
      </header>
      {/* メニュー */}
      <nav className="flex h-[22px] shrink-0 items-center pl-[7px] text-[12px] text-[#666]">
        {menus.map((m) => (
          <span key={m} className={m.startsWith("ArcGIS") ? "mr-[15.750px] tracking-[0.300px]" : "mr-[15.750px]"}>{m}</span>
        ))}
        <span className="mr-[7px] ml-auto">用Geosoft I登录</span>
      </nav>
      <ToolBars />
      <main className="flex min-h-0 flex-1">
        <LeftPanel />
        <div className="relative flex-1 border-l border-[#bbb] bg-gradient-to-b from-[#f4f0f4] to-[#666468]">
          <MdiWindow />
        </div>
      </main>
      <div className="flex h-[20px] shrink-0 items-center border-t border-[#d8d4d8] pt-[3px] pl-[2px] text-[12px] text-[#333]">查看帮助，请按F1</div>
      <Taskbar />
      <Dialog />
      <CursorHalo />
      <Monitor />
    </div>
  );
}
